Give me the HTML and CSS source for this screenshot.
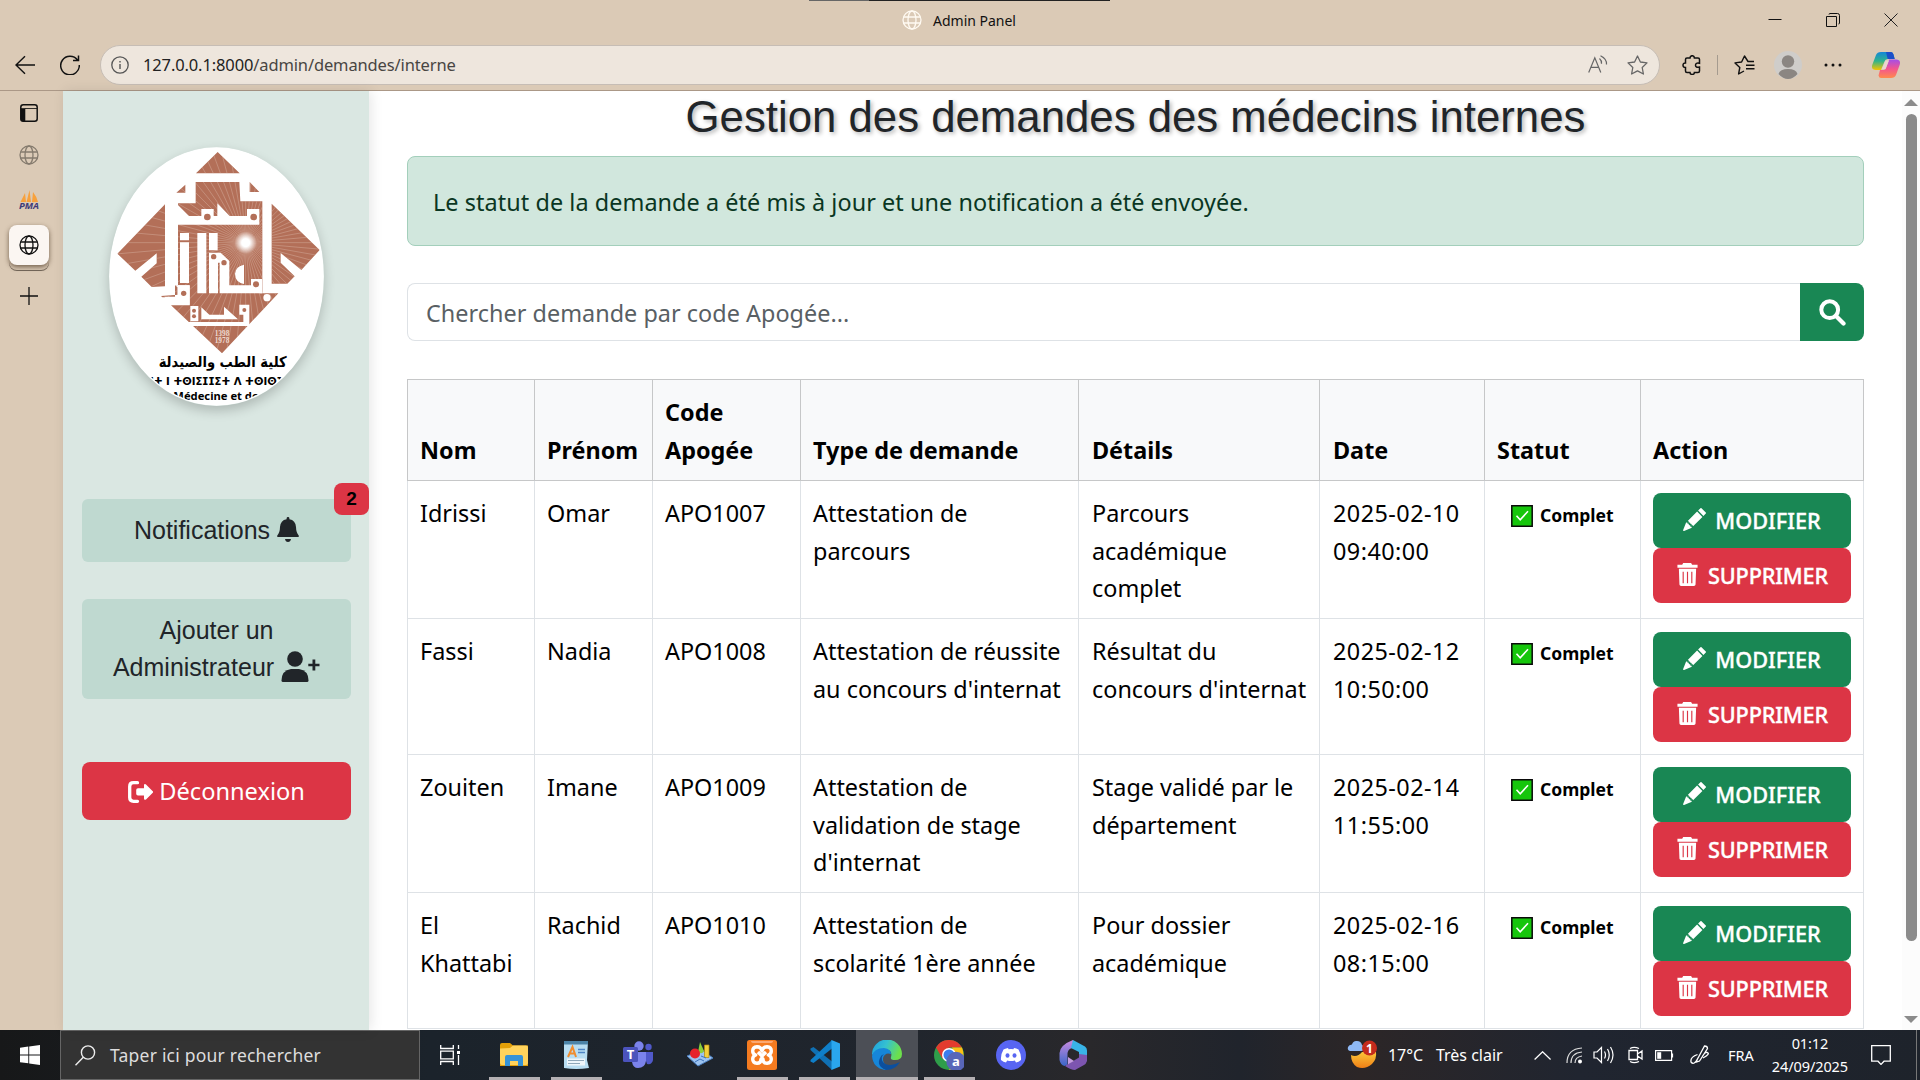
FILE: index.html
```html
<!DOCTYPE html>
<html lang="fr">
<head>
<meta charset="utf-8">
<title>Admin Panel</title>
<link rel="stylesheet" href="styles.css">
</head>
<body>
<svg class="defs" width="0" height="0" aria-hidden="true">
  <symbol id="globe" viewBox="0 0 20 20"><g fill="none" stroke="currentColor" stroke-width="1.3"><circle cx="10" cy="10" r="9"/><ellipse cx="10" cy="10" rx="4" ry="9"/><path d="M1.8 7h16.4M1.8 13h16.4"/></g></symbol>
  <symbol id="pencil" viewBox="0 0 16 16"><path fill="currentColor" d="M12.85.15a.5.5 0 0 0-.7 0L10.5 1.8l3.7 3.7 1.65-1.65a.5.5 0 0 0 0-.7zM13.5 6.2 9.8 2.5 3.3 9h.2a.5.5 0 0 1 .5.5v.5h.5a.5.5 0 0 1 .5.5v.5h.5a.5.5 0 0 1 .5.5v.5h.5a.5.5 0 0 1 .5.5v.2zM6 13.7a.5.5 0 0 1 0-.2V13h-.5a.5.5 0 0 1-.5-.5V12h-.5a.5.5 0 0 1-.5-.5V11h-.5a.5.5 0 0 1-.5-.5V10h-.5l-.2.1-.2.2-2 5a.5.5 0 0 0 .65.65l5-2 .2-.1z"/></symbol>
  <symbol id="trash" viewBox="0 0 16 16"><path fill="currentColor" fill-rule="evenodd" d="M5 0h5.500l.7 1.300H15v2H1v-2h3.300zM2 4h12l-.4 11q-.1 1-1.100 1h-9q-1 0-1.100-1zM4.600 6v8h.8V6zM7.600 6v8h.8V6zM10.600 6v8h.8V6z"/></symbol>
  <symbol id="check" viewBox="0 0 22 22"><path d="M.8.8h20.400v20.400H.8z" fill="#16c60c" stroke="#0a0a0a" stroke-width="1.500"/><path d="m5.500 10.700 3.700 4L17 6.300" fill="none" stroke="#fff" stroke-width="1.600"/></symbol>
  <linearGradient id="gEdge" x1="0" y1="0" x2="1" y2=".3"><stop offset="0" stop-color="#1b9de2"/><stop offset=".5" stop-color="#35c1d0"/><stop offset="1" stop-color="#6ce04c"/></linearGradient>
  <linearGradient id="gCop" x1="0" y1="0" x2="0" y2="1"><stop offset="0" stop-color="#1487d8"/><stop offset=".5" stop-color="#2fb38d"/><stop offset="1" stop-color="#f6c400"/></linearGradient>
  <linearGradient id="gCop2" x1="0" y1="0" x2="0" y2="1"><stop offset="0" stop-color="#a44ee8"/><stop offset=".5" stop-color="#f3558f"/><stop offset="1" stop-color="#ff8a4d"/></linearGradient>
  <linearGradient id="g365" x1="0" y1="0" x2="0" y2="1"><stop offset="0" stop-color="#c98be0"/><stop offset="1" stop-color="#3a66c8"/></linearGradient>
  <linearGradient id="gMoon" x1="0" y1="0" x2="0" y2="1"><stop offset="0" stop-color="#fbc63a"/><stop offset="1" stop-color="#ef7f16"/></linearGradient>
  <radialGradient id="gSun"><stop offset="0" stop-color="#fff"/><stop offset=".35" stop-color="#fff"/><stop offset="1" stop-color="#fff" stop-opacity="0"/></radialGradient>
</svg>

<header class="titlebar">
  <div class="tab-preview"></div>
  <div class="window-title"><svg class="i20 light"><use href="#globe"/></svg><span>Admin Panel</span></div>
  <div class="window-buttons">
    <svg width="14" height="14" viewBox="0 0 14 14"><path d="M.5 6.500h13" stroke="#111"/></svg>
    <svg width="14" height="14" viewBox="0 0 14 14"><path d="M.5 3.500h10v10H.5zM3 1.500q0-1 1-1h7.500q2 0 2 2V10q0 1-1 1" fill="none" stroke="#111"/></svg>
    <svg width="14" height="14" viewBox="0 0 14 14"><path d="m.5.5 13 13m0-13-13 13" stroke="#222"/></svg>
  </div>
</header>

<div class="toolbar">
  <svg class="nav-icon" viewBox="0 0 20 20"><path d="M20 10H1M10 1.200 1 10l9 8.800" fill="none" stroke="#111" stroke-width="1.400"/></svg>
  <svg class="nav-icon reload" viewBox="0 0 20 20"><path d="M17.500 5A9.300 9.300 0 1 0 19.300 10M18.500.5v5h-5.500" fill="none" stroke="#111" stroke-width="1.500"/></svg>
  <div class="address">
    <svg width="18" height="18" viewBox="0 0 18 18"><circle cx="9" cy="9" r="8.200" fill="none" stroke="#555" stroke-width="1.300"/><path d="M9 8v5M9 5v1.400" stroke="#555" stroke-width="1.400"/></svg>
    <span class="url">127.0.0.1:8000<i>/admin/demandes/interne</i></span>
    <svg width="20" height="20" viewBox="0 0 20 20"><g fill="none" stroke="#666" stroke-width="1.200"><path d="M.7 17.500 6.800 2.800l6 14.700M3 12.300h7.700M11.500 3.500q2.300 2 2 5.200M12.500.8Q19 4 18.500 9.500"/></g></svg>
    <svg width="21" height="20" viewBox="0 0 21 20"><path id="star" d="m10.500 1 2.900 6 6.600.9-4.800 4.600 1.200 6.500-5.900-3.100L4.600 19l1.200-6.500L1 7.900 7.600 7z" fill="none" stroke="#666" stroke-width="1.300" stroke-linejoin="round"/></svg>
  </div>
  <div class="tools">
    <svg width="20" height="20" viewBox="0 0 20 20"><path d="M5 3h3q0-2.300 2.200-2.300T12.400 3H16q1.500 0 1.500 1.500v3.800q-4-.8-4 1.900t4 1.900v3.800q0 1.500-1.500 1.500h-3.600q0 2-2.200 2T8 17.400H5q-1.500 0-1.500-1.500V12.500Q1 12.500 1 10.200T3.500 8V4.500Q3.500 3 5 3z" fill="none" stroke="#111" stroke-width="1.500"/></svg>
    <b class="sep"></b>
    <svg width="21" height="20" viewBox="0 0 21 20"><path d="M20 6.500h-6L10.500 1 7.600 7 1 7.900l4.800 4.600L4.600 19 10 16M12 10.200h8.500M12 13.800h8.500" fill="none" stroke="#111" stroke-width="1.400" stroke-linejoin="round"/></svg>
    <svg class="avatar" viewBox="0 0 28 28"><circle cx="14" cy="14" r="14" fill="#cfcdca"/><circle cx="14" cy="10.500" r="6.200" fill="#8b8682"/><path d="M4.500 23q1.500-5 9.500-5t9.500 5Q19 28 14 28t-9.500-5z" fill="#8b8682"/></svg>
    <svg width="18" height="4" viewBox="0 0 18 4"><g fill="#111"><circle cx="2" cy="2" r="1.500"/><circle cx="9" cy="2" r="1.500"/><circle cx="16" cy="2" r="1.500"/></g></svg>
    <svg class="copilot" viewBox="0 0 28 28"><path d="M9 1h10q2 0 2.500 2.500l1.200 4.500h-7q-2.500 0-3.200 2.500L9 19H4q-5 0-3.800-5L4 4q1.200-3 5-3z" fill="url(#gCop)"/><path d="M14 1h5q2 0 2.500 2.500l1.200 4.500h-7z" fill="#1b4fc9"/><path d="M19 27H9q-2 0-2.500-2.500L8 19h3.500q2 0 2.700-2.500L17 8.500h7q5 0 3.800 5L24 24q-1.200 3-5 3z" fill="url(#gCop2)"/><path d="M13.500 9.500h3.500L13.500 18H9.800z" fill="#ead6cf"/></svg>
  </div>
</div>

<div class="workspace">
  <nav class="tabs">
    <svg class="t-panel" viewBox="0 0 18 18"><rect x=".8" y=".8" width="16.400" height="16.400" rx="2.500" fill="none" stroke="#111" stroke-width="1.500"/><path d="M1 4.500h16v0H5V17H2l-1-1z" fill="#111" stroke="#111" stroke-width=".6"/></svg>
    <svg class="i20 dim"><use href="#globe"/></svg>
    <svg class="pma" viewBox="0 0 20 20"><path d="M6 3 7 12H1.500zM10.500 0 12 12H7.500zM14 2q4 5 5 10l-6 .2z" fill="#f7a13d"/><text x="10" y="19" text-anchor="middle" textLength="20" lengthAdjust="spacingAndGlyphs">PMA</text></svg>
    <span class="tab-active"><svg class="i20"><use href="#globe"/></svg></span>
    <svg class="t-plus" viewBox="0 0 18 18"><path d="M9 0v18M0 9h18" stroke="#111" stroke-width="1.300"/></svg>
  </nav>

  <aside class="sidebar">
    <svg class="logo" viewBox="57 51 645 777">
      <clipPath id="oval"><ellipse cx="379.500" cy="439.500" rx="318" ry="384"/></clipPath>
      <clipPath id="brick"><path id="bricks" d="M383 66 449 130H318zM259 188l27-24v24zM479 156l29 30h-29zM317 156h131l3 58h66v274l-12 2h60L396 670 243 526h56V466h-35V220h53zM82 371 225 223v246l-40 2-31-31 46-40v-30l-64 52zM545 221 689 360l-55 60-62-51v29l42 41-22 22h-47zM213 498l50-4v-28h-8v36h-38z"/></clipPath>
      <ellipse cx="379.500" cy="439.500" rx="322" ry="388" fill="#fff"/>
      <g clip-path="url(#brick)">
        <rect x="57" y="51" width="645" height="630" fill="#b36f58"/>
        <g stroke="#dcb9ab" stroke-width="1.600" opacity=".75">
          <path id="rays" d="M17 338H917M24 260 910 416M44 184 890 492M77 113 857 563M122 49 812 627M178-7 756 683M242-52 692 728M313-85 621 761M389-105 545 781M467-112V788M545-105 389 781M621-85 313 761M692-52 242 728M756-7 178 683M812 49 122 627M857 113 77 563M890 184 44 492M910 260 24 416"/>
          <use href="#rays" transform="rotate(5 467 338)"/>
        </g>
      </g>
      <circle cx="467" cy="338" r="34" fill="url(#gSun)"/>
      <g fill="#fff">
        <path d="M261 222 297 258h37v-21h37v21h11v-38l37 38h52v-21h37v47H261zM270 309h27v22h-27zM270 337h27v122h-27zM322 309h27v181h-27zM357 309h26v52h-26zM357 368h35l26 25v73h65v-19h33v43H389v-92h-5v92h-27zM462 404v58q-27-6-27-31 2-22 27-27zM255 466h44v58h-56l-20-24h40v-28zM301 528h24v46h-24zM334 532l24 22h44v-24l42 38H334zM448 524h30v64H297v-12h163v-22h-12z"/>
        <circle cx="531" cy="503" r="11"/>
      </g>
      <g fill="#b36f58"><circle cx="352" cy="261" r="10"/><circle cx="491" cy="261" r="10"/><circle cx="371" cy="380" r="8"/><circle cx="402" cy="398" r="8"/><circle cx="498" cy="463" r="9"/><circle cx="281" cy="490" r="8"/><circle cx="312" cy="542" r="6"/><circle cx="312" cy="559" r="6"/><circle cx="463" cy="540" r="6"/></g>
      <g class="logo-year" text-anchor="middle"><text x="396" y="617">1398</text><text x="396" y="639">1978</text></g>
      <g clip-path="url(#oval)" text-anchor="middle">
        <text class="logo-ar" x="398" y="711" textLength="384" lengthAdjust="spacingAndGlyphs">كلية الطب والصيدلة</text>
        <text class="logo-tif" x="385" y="765" textLength="410" lengthAdjust="spacingAndGlyphs">ⵏⵜ ⵏ ⵜⵙⵏⵉⵊⵊⵉⵜ ⴷ ⵜⵙⵏⵙⴼ</text>
        <text class="logo-fr" x="378" y="811" textLength="256" lengthAdjust="spacingAndGlyphs">Médecine et de</text>
      </g>
    </svg>
    <a class="side-link notif">Notifications <svg width="22" height="25" viewBox="0 0 22 25"><path d="M9.600 1.500a1.400 1.400 0 0 1 2.800 0v.8q6.100 1 6.600 7.700.1 5.500 2.700 8.500.6 1.500-.6 1.500H.9q-1.200 0-.6-1.500Q2.900 15.500 3 10q.5-6.700 6.600-7.700zM8 22h6q-.5 3-3 3t-3-3z" fill="#212529"/></svg><b class="count">2</b></a>
    <a class="side-link add">Ajouter un<br>Administrateur <svg width="39" height="32" viewBox="0 0 39 32"><g fill="#212529"><circle cx="14" cy="8" r="7.800"/><path d="M10 18h8q9.500 1.500 9.500 11.500 0 1.500-1.500 1.500H2q-1.500 0-1.500-1.500Q.5 19.500 10 18z"/><path d="M31.500 8.500h2.800v4.200H38.500v2.600h-4.200v4.300h-2.800v-4.300h-4.200v-2.600h4.200z"/></g></svg></a>
    <a class="side-link logout"><svg width="25" height="22" viewBox="0 0 25 22"><path d="M9.500 1.700H5.500Q1.700 1.700 1.700 5.500v11q0 3.800 3.800 3.800h4" fill="none" stroke="#fff" stroke-width="3.300" stroke-linecap="round"/><path d="M16 3.500q1-.8 2 0l7 7q.4.5 0 1l-7 7q-2 1-2-1v-3H10q-1.800 0-1.800-1.700V9Q8.200 7.300 10 7.300h6z" fill="#fff"/></svg> Déconnexion</a>
  </aside>

  <main class="content">
    <h1>Gestion des demandes des médecins internes</h1>
    <div class="alert">Le statut de la demande a été mis à jour et une notification a été envoyée.</div>
    <div class="search"><span class="field">Chercher demande par code Apogée...</span><span class="go"><svg width="27" height="27" viewBox="0 0 27 27"><circle cx="10.700" cy="10.700" r="8.400" fill="none" stroke="#fff" stroke-width="4"/><path d="m17 17 7.500 7.500" stroke="#fff" stroke-width="4.300" stroke-linecap="round"/></svg></span></div>
    <table>
      <colgroup><col class="c1"><col class="c2"><col class="c3"><col class="c4"><col class="c5"><col class="c6"><col class="c7"><col class="c8"></colgroup>
      <thead><tr><th>Nom</th><th>Prénom</th><th>Code<br>Apogée</th><th>Type de demande</th><th class="in">Détails</th><th class="in">Date</th><th>Statut</th><th>Action</th></tr></thead>
      <tbody>
        <tr class="tall"><td>Idrissi</td><td>Omar</td><td>APO1007</td><td>Attestation de<br>parcours</td><td class="in">Parcours<br>académique<br>complet</td><td class="in num">2025-02-10<br>09:40:00</td><td><span class="status"><svg><use href="#check"/></svg>Complet</span></td><td class="actions"><a class="btn edit"><svg><use href="#pencil"/></svg>MODIFIER</a><a class="btn del"><svg><use href="#trash"/></svg>SUPPRIMER</a></td></tr>
        <tr><td>Fassi</td><td>Nadia</td><td>APO1008</td><td>Attestation de réussite<br>au concours d'internat</td><td class="in">Résultat du<br>concours d'internat</td><td class="in num">2025-02-12<br>10:50:00</td><td><span class="status"><svg><use href="#check"/></svg>Complet</span></td><td class="actions"><a class="btn edit"><svg><use href="#pencil"/></svg>MODIFIER</a><a class="btn del"><svg><use href="#trash"/></svg>SUPPRIMER</a></td></tr>
        <tr class="tall"><td>Zouiten</td><td>Imane</td><td>APO1009</td><td>Attestation de<br>validation de stage<br>d'internat</td><td class="in">Stage validé par le<br>département</td><td class="in num">2025-02-14<br>11:55:00</td><td><span class="status"><svg><use href="#check"/></svg>Complet</span></td><td class="actions"><a class="btn edit"><svg><use href="#pencil"/></svg>MODIFIER</a><a class="btn del"><svg><use href="#trash"/></svg>SUPPRIMER</a></td></tr>
        <tr><td>El<br>Khattabi</td><td>Rachid</td><td>APO1010</td><td>Attestation de<br>scolarité 1ère année</td><td class="in">Pour dossier<br>académique</td><td class="in num">2025-02-16<br>08:15:00</td><td><span class="status"><svg><use href="#check"/></svg>Complet</span></td><td class="actions"><a class="btn edit"><svg><use href="#pencil"/></svg>MODIFIER</a><a class="btn del"><svg><use href="#trash"/></svg>SUPPRIMER</a></td></tr>
      </tbody>
    </table>
  </main>

  <div class="scrollbar"><i class="up"></i><b></b><i class="down"></i></div>
</div>

<footer class="taskbar">
  <div class="start"><svg width="20" height="20" viewBox="0 0 20 20"><path d="M0 2.800 8.300 1.600v7.800H0zM9.200 1.500 20 0v9.400H9.200zM0 10.400h8.300v7.900L0 17.200zM9.200 10.400H20V20L9.200 18.500z" fill="#fff"/></svg></div>
  <div class="task-search"><svg width="21" height="21" viewBox="0 0 21 21"><g fill="none" stroke="#eee" stroke-width="1.400"><circle cx="13" cy="7.500" r="6.600"/><path d="M8.300 12.200.5 20.300"/></g></svg><span>Taper ici pour rechercher</span></div>
  <div class="slot view"><svg width="20" height="20" viewBox="0 0 20 20"><g fill="none" stroke="#fff" stroke-width="1.300"><path d="M.7 0v3.500h12.600V0M.7 20v-3.500h12.600V20M.7 6.200h12.600v7.600H.7zM18.500 0v4M18.500 10v10"/><path d="M17 6h3v3h-3z" fill="#fff" stroke="none"/></g></svg></div>
  <div class="slot on"><svg viewBox="0 0 30 30"><path d="M1 5q0-2 2-2h8l3 2.500h15V26H1z" fill="#e3a008"/><path d="M1 8.500 11 8l3-2.500h13q2 0 2 2V23q0 2-2 2H3q-2 0-2-2z" fill="#ffd35c"/><path d="M6 26V17q0-2 2-2h14q2 0 2 2v9h-5v-5h-8v5z" fill="#3593d8"/></svg></div>
  <div class="slot on"><svg viewBox="0 0 30 30"><path d="M3 1h24l-1 19 2 8q-13 2-25 0z" fill="#b9def2"/><path d="M3 1h24v3.500H3z" fill="#4c84a8"/><path d="m7 17 4.500-10L15 17M9 13.500h5" fill="none" stroke="#f08c2e" stroke-width="2"/><path d="M17 9.500h7M17 12.500h7" stroke="#4f86c6" stroke-width="1.500"/><path d="M6 18.500h18v7H6z" fill="#eef6fb"/><path d="M7 20.500h16M7 23.500h12" stroke="#8fa8ba"/></svg></div>
  <div class="slot"><svg viewBox="0 0 30 30"><circle cx="16" cy="6" r="4.700" fill="#7b83eb"/><circle cx="25.500" cy="7" r="3.200" fill="#5059c9"/><path d="M20 12h10v8q-1 5-6 4z" fill="#5059c9"/><path d="M9 12h14v9q-1 7-8 7-5 0-6-6z" fill="#7b83eb"/><rect y="7" width="15" height="15" rx="1.500" fill="#4b53bc"/><text class="glyph" x="7.500" y="19" text-anchor="middle">T</text></svg></div>
  <div class="slot"><svg viewBox="0 0 30 30"><path d="m2 16 15-6 11 8-15 8z" fill="#9cc3f0" stroke="#4b7fc0"/><path d="m15 2 4 9q-2 4-6 1z" fill="#8bcf3b"/><path d="M19.500 5h4.500v12.500h-4.500z" fill="#f4cf3c" stroke="#b58b0a" stroke-width=".7"/><circle cx="10" cy="13.500" r="5" fill="#e6232c"/><path d="m10 22 5-3 4 2m-3-5 5 2" stroke="#3d73bd" fill="none"/></svg></div>
  <div class="slot on"><svg viewBox="0 0 30 30"><rect width="30" height="30" rx="2.500" fill="#f47b20"/><path d="M4 1h22q0 2-3 2H7Q4 3 4 1z" fill="#fba871"/><path d="M15 11q-1-4.300-5-4.300-4.300.3-4.300 4.300 0 3 3 4-3 1-3 4 0 4 4.300 4.300 4 0 4-4.300h2q0 4.300 4 4.300 4.300-.3 4.300-4.300 0-3-3-4 3-1 3-4 0-4-4.300-4.300-4 0-5 4.300zM11 12l3 3h2l3-3M15 15v3" fill="none" stroke="#fff" stroke-width="3.400" stroke-linejoin="round"/></svg></div>
  <div class="slot on"><svg viewBox="0 0 30 30"><path d="m3.500 7 18.500 14.500V30L.5 10v-1.500z" fill="#1070b3"/><path d="m3.500 23 18.500-14.500V0L.5 20v1.500z" fill="#0f7fc9"/><path d="M21.500 0 30 3.500v23L21.500 30z" fill="#2aa6ee"/></svg></div>
  <div class="slot on wide"><svg viewBox="0 0 30 30"><path d="M0 15A15 15 0 0 1 30 14q0 6-7 6-5 0-4-3 2-7-6-8-8 0-13 6z" fill="url(#gEdge)"/><path d="M0 16Q2 8 12 8q7 1 7 6-6-2-8 4-1 7 8 9-3 3-6 3Q1 28 0 16z" fill="#1686d9"/><path d="M12 14q-4 3-1 8 5 6 17 0-5 8-14 8Q4 26 8 18q1-3 4-4z" fill="#0c4f9e"/></svg></div>
  <div class="slot on"><svg viewBox="0 0 30 30"><circle cx="15" cy="15" r="15" fill="#2f9e4a"/><path d="M2 7.500A15 15 0 0 1 28 7.500H15L8.500 18.800z" fill="#e33b2e"/><path d="M28 7.500Q33 20 22 28.300L15 30l6.500-11.200L18 7.500z" fill="#fbc116"/><circle cx="15" cy="15" r="7" fill="#fff"/><circle cx="15" cy="15" r="5.500" fill="#3b7ded"/><circle cx="22" cy="21.500" r="9.700" fill="#5866b8"/><text class="glyph" x="22" y="26" text-anchor="middle">a</text></svg></div>
  <div class="slot"><svg viewBox="0 0 30 30"><circle cx="15" cy="15" r="15" fill="#5865f2"/><path d="m12 8 .6 1.200q2.400-.4 4.800 0L18 8q3 .5 4.500 1.500 3 5 2.500 10.500-2.500 2-5 2.500l-1.200-2q-3.800 1-7.600 0l-1.200 2q-2.500-.5-5-2.500-.5-5.500 2.500-10.500Q9 8.500 12 8z" fill="#fff"/><ellipse cx="11.500" cy="15.500" rx="2" ry="2.200" fill="#5865f2"/><ellipse cx="18.500" cy="15.500" rx="2" ry="2.200" fill="#5865f2"/></svg></div>
  <div class="slot"><svg viewBox="0 0 30 30"><path d="M15 0q-13 5-13.500 13v7q1 5 5 6l3-1.500V13q1-5 6-5z" fill="url(#g365)"/><path d="m15 0 12 6.500q2 1.500 2 4v10L21 16v-4L13 8z" fill="#39b4e8"/><path d="M29 15v6q-1 3-3 4l-9 5q-4 0-10-4l14-8.500V14z" fill="#7d55b0"/><path d="m7 26 3-1.500V17l6 4z" fill="#c49ce0"/></svg></div>

  <div class="tray">
    <svg class="weather" viewBox="0 0 30 30"><path d="M4 15q6 3 11-3h14q1 7-4 12-7 6-15 3-6-4-6-12z" fill="url(#gMoon)"/><path d="M3 11Q0 10 1 7q1-2.500 4-2.500 1-4 5-3.500 4 0 5 4 3 1 2 4.500-1 1.500-3 1.500z" fill="#8fb9f5"/><circle cx="22.500" cy="8" r="7.500" fill="#c42b1c"/><text class="badge" x="22.500" y="12.500" text-anchor="middle">1</text></svg>
    <span class="w-temp">17°C</span><span class="w-sky">Très clair</span>
    <svg class="y-chev" width="17" height="9" viewBox="0 0 17 9"><path d="m.6 8.500 8-7.700 8 7.700" fill="none" stroke="#fff" stroke-width="1.300"/></svg>
    <svg class="y-wifi" width="17" height="17" viewBox="0 0 17 17"><g fill="none" stroke="#ddd" stroke-width="1.200"><path d="M1 16Q1 2 16 1M5 16Q5 6 16 5M9 16Q9 10 16 9"/></g><circle cx="14" cy="14.500" r="2" fill="#fff"/></svg>
    <svg class="y-vol" width="21" height="18" viewBox="0 0 21 18"><path d="M1 6v6h3l4.500 4.500v-15L4 6zM11.500 5.500q2 3.500 0 7M14.500 3q3.500 6 0 12M17.500 1q5 8 0 16" fill="none" stroke="#fff" stroke-width="1.200"/></svg>
    <svg class="y-cam" width="15" height="18" viewBox="0 0 15 18"><path d="M1 4.500h8.500v9H1zM9.500 8 14 5v8l-4.500-3M2 2.500Q6 .2 11 2.500M2 15.500q4 2.300 9 0" fill="none" stroke="#fff" stroke-width="1.300"/></svg>
    <svg class="y-bat" width="19" height="11" viewBox="0 0 19 11"><path d="M.6.600h16v9.800H.6zM17.500 3.500v4" fill="none" stroke="#fff" stroke-width="1.200"/><path d="M2.200 2.200h4v6.600h-4z" fill="#fff"/></svg>
    <svg class="y-pen" width="20" height="20" viewBox="0 0 20 20"><path d="M7 15 14.500 1q3 0 3 2.500L9.500 16l-3 1zM7.500 9.500Q0 12 1 17q3 4 7-4M12 12q3-5 5-4.500 4 1-4 5.500" fill="none" stroke="#fff" stroke-width="1.300"/></svg>
    <span class="lang">FRA</span>
    <span class="clock">01:12<br>24/09/2025</span>
    <svg class="y-note" width="20" height="20" viewBox="0 0 20 20"><path d="M.7.700h18.600v15.500H13l-3 3.200-3-3.200H.7z" fill="none" stroke="#fff" stroke-width="1.300"/></svg>
    <b class="peek"></b>
  </div>
</footer>
</body>
</html>
```
FILE: styles.css
```css
* { box-sizing: border-box; }
body { margin: 0; width: 1920px; height: 1080px; overflow: hidden; display: flex; flex-direction: column; background: #dbcab6; font-family: "Noto Sans", "Open Sans", sans-serif; color: #212529; }
svg { display: block; flex: none; }
.defs { position: absolute; }
.i20 { width: 20px; height: 20px; color: #111; }
.light { color: #fffaf2; }
.dim { color: #857b6e; }

/* browser chrome */
.titlebar { height: 40px; flex: none; display: grid; grid-template-columns: 1fr auto 1fr; align-items: start; position: relative; }
.tab-preview { position: absolute; left: 809px; top: 0; width: 301px; height: 1px; background: linear-gradient(90deg, #666 60px, #222 60px); }
.window-title { grid-column: 2; display: flex; align-items: center; gap: 11px; height: 40px; margin-left: -2px; font-size: 14px; color: #111; letter-spacing: -.02px; }
.window-buttons { display: flex; justify-content: flex-end; gap: 44px; padding: 13px 22px 0 0; }
.toolbar { height: 51px; flex: none; display: flex; align-items: center; padding: 0 13px 1px 15px; border-bottom: 1px solid #ab9887; }
.nav-icon { width: 20px; height: 20px; }
.reload { margin-left: 25px; }
.address { width: 1560px; height: 40px; margin-left: 20px; display: flex; align-items: center; border: 1px solid #c6bdb5; border-radius: 20px; background: #eee6dd; padding: 0 11px 0 10px; gap: 19px; }
.url { flex: 1; margin-left: -5px; font-size: 16.500px; color: #222; letter-spacing: -.13px; }
.url i { font-style: normal; color: #484542; }
.tools { flex: 1; display: flex; align-items: center; padding-left: 22px; }
.sep { width: 1px; height: 20px; margin: 0 16px 0 15px; background: #a59b8f; }
.avatar { width: 28px; height: 28px; margin-left: 19px; }
.avatar + svg { margin-left: 22px; }
.copilot { width: 28px; height: 28px; margin-left: 30px; }

.workspace { flex: 1; min-height: 0; display: flex; }
.tabs { width: 63px; display: flex; flex-direction: column; align-items: center; padding: 13px 5px 0 0; }
.t-panel { width: 18px; height: 18px; }
.tabs .dim { margin-top: 23px; }
.pma { width: 20px; height: 20px; margin-top: 25px; }
.pma text { font: italic bold 8.500px "Noto Sans", sans-serif; fill: #3f3c79; }
.tab-active { width: 40px; height: 40px; margin-top: 15px; display: grid; place-items: center; border-radius: 8px; background: #fbf6f2; box-shadow: 0 2px 5px rgba(60,40,20,.65), 0 5px 0 -0px #dbcab6, 0 6px 0 #74685b; }
.t-plus { width: 18px; height: 18px; margin-top: 22px; }

/* application sidebar */
.sidebar { width: 306px; display: flex; flex-direction: column; align-items: center; padding: 56px 18px 0 19px; background: #dae7e2; box-shadow: 2px 0 12px rgba(0,0,0,.1); font-family: "Liberation Sans", Arial, sans-serif; z-index: 1; }
.logo { width: 215px; height: 259px; margin-left: -1px; border-radius: 50%; box-shadow: 0 5px 12px rgba(0,0,0,.2); }
.logo-year { font: bold 22px "Liberation Serif", serif; fill: #efd9cf; }
.logo-ar { font: bold 44px "DejaVu Sans", sans-serif; }
.logo-tif { font: bold 34px "DejaVu Sans", sans-serif; }
.logo-fr { font: bold 34px "Noto Sans", sans-serif; }
.side-link { width: 269px; display: block; position: relative; padding: 12.500px 0; border-radius: 6px; background: #bfd9d0; text-align: center; font-size: 25px; line-height: 37.500px; }
.side-link svg { display: inline-block; vertical-align: -3px; }
.notif { margin-top: 93px; height: 63px; }
.count { position: absolute; right: -18px; top: -16px; width: 35px; height: 32px; border-radius: 8px; background: #dc3545; color: #000; font-size: 19px; line-height: 31px; }
.add { margin-top: 37px; height: 100px; }
.add svg { vertical-align: -7px; }
.logout { margin-top: 63px; height: 58px; padding: 11px 0; border-radius: 8px; background: #dc3545; color: #fff; font: 23.600px/37.500px "Noto Sans", sans-serif; }

/* request list */
.content { width: 1533px; padding: 0 38px; background: #fff; overflow: hidden; font-size: 23.400px; }
h1 { margin: 0; height: 65px; text-align: center; font: 43.750px/52px "Liberation Sans", Arial, sans-serif; text-shadow: 2px 2px 4px rgba(0,0,0,.3); white-space: nowrap; }
.alert { height: 90px; padding: 2px 25px 0; display: flex; align-items: center; border: 1px solid #a3cfbb; border-radius: 8px; background: #d1e7dd; color: #0a3622; letter-spacing: .07px; }
.search { height: 58px; margin-top: 37px; display: flex; }
.field { flex: 1; display: flex; align-items: center; padding: 2px 0 0 18px; border: 1px solid #dee2e6; border-right: 0; border-radius: 8px 0 0 8px; color: #595f64; letter-spacing: .03px; }
.go { width: 64px; display: grid; place-items: center; border-radius: 0 8px 8px 0; background: #198754; }
table { width: 1457px; margin-top: 38px; table-layout: fixed; border-collapse: collapse; color: #000; }
.c1 { width: 127px; } .c2 { width: 118px; } .c3 { width: 148px; } .c4 { width: 278px; } .c5 { width: 241px; } .c6 { width: 165px; } .c7 { width: 156px; } .c8 { width: 223px; }
th, td { padding: 14px 0 0 12px; text-align: left; vertical-align: top; line-height: 37.500px; white-space: nowrap; border: 1px solid #dee2e6; }
th { height: 101px; padding-top: 12px; padding-bottom: 11px; vertical-align: bottom; font-weight: 700; font-size: 23.400px; background: #f8f9fa; border-color: #c6c7c8; }
th.in, td.in { padding-left: 13px; }
td { height: 136px; }
.num { letter-spacing: .45px; }
.tall td { height: 138px; }
.status { display: flex; align-items: center; gap: 7px; padding-left: 14px; height: 42px; font-size: 17.500px; font-weight: 700; }
.status svg { width: 22px; height: 22px; }
.actions { padding-top: 13px; }
.tall .actions { padding-top: 12px; }
.btn { width: 198px; height: 55px; display: flex; align-items: center; justify-content: center; gap: 9px; border-radius: 8px; color: #fff; font-size: 21.700px; font-weight: 500; -webkit-text-stroke: .35px #fff; }
.btn svg { width: 23px; height: 23px; margin-top: -2px; }
.edit { background: #198754; }
.del { background: #dc3545; letter-spacing: -.15px; }

.scrollbar { width: 18px; display: flex; flex-direction: column; align-items: center; padding: 8px 0 7px; background: #fcfcfc; }
.scrollbar b { width: 11px; height: 827px; margin-top: 8px; border-radius: 6px; background: #8b8b8b; }
.up, .down { border: 7px solid transparent; border-top: 0; border-bottom: 7px solid #8b8b8b; }
.down { margin-top: auto; transform: rotate(180deg); }

/* desktop taskbar */
.taskbar { height: 50px; flex: none; display: flex; background: linear-gradient(90deg, #171819 0, #1b232b 430px, #20252d 900px, #29282b 1090px, #20242c 1240px, #2c2627 1360px, #202530 1580px, #1e232b 1920px); color: #fff; }
.start { width: 60px; display: grid; place-items: center; }
.task-search { width: 360px; display: flex; align-items: center; padding-left: 14px; gap: 14px; border: 1px solid #656565; background: #333; font-size: 17.500px; letter-spacing: .22px; color: #ddd; }
.slot { width: 62.100px; display: grid; place-items: center; position: relative; }
.slot svg { width: 30px; height: 30px; }
.view { width: 60px; margin-right: 3px; }
.view svg { width: 20px; height: 20px; }
.on::after { content: ""; position: absolute; bottom: 0; left: 6px; width: 51px; height: 3px; background: #b4b0b3; }
.wide { background: #4c4f56; }
.wide::after { left: 0; width: 100%; }
.glyph { font: bold 13px "Noto Sans", sans-serif; fill: #fff; }
.tray { flex: 1; display: flex; align-items: center; padding-left: 243px; font-size: 16px; }
.weather { width: 30px; height: 30px; }
.badge { font: bold 12px "Noto Sans", sans-serif; fill: #fff; }
.w-temp { margin-left: 11px; width: 48px; }
.w-sky { width: 98px; letter-spacing: 0; }
.y-wifi { margin-left: 15px; }
.y-vol { margin-left: 10px; }
.y-cam { margin-left: 14px; }
.y-bat { margin-left: 12px; }
.y-pen { margin-left: 16px; }
.lang { margin-left: 18px; width: 43px; font-size: 14.500px; }
.clock { width: 78px; text-align: center; line-height: 23px; font-size: 14.500px; letter-spacing: -.1px; white-space: nowrap; }
.y-note { margin-left: 22px; }
.peek { width: 1px; height: 50px; margin-left: 25px; background: #777; }
```
